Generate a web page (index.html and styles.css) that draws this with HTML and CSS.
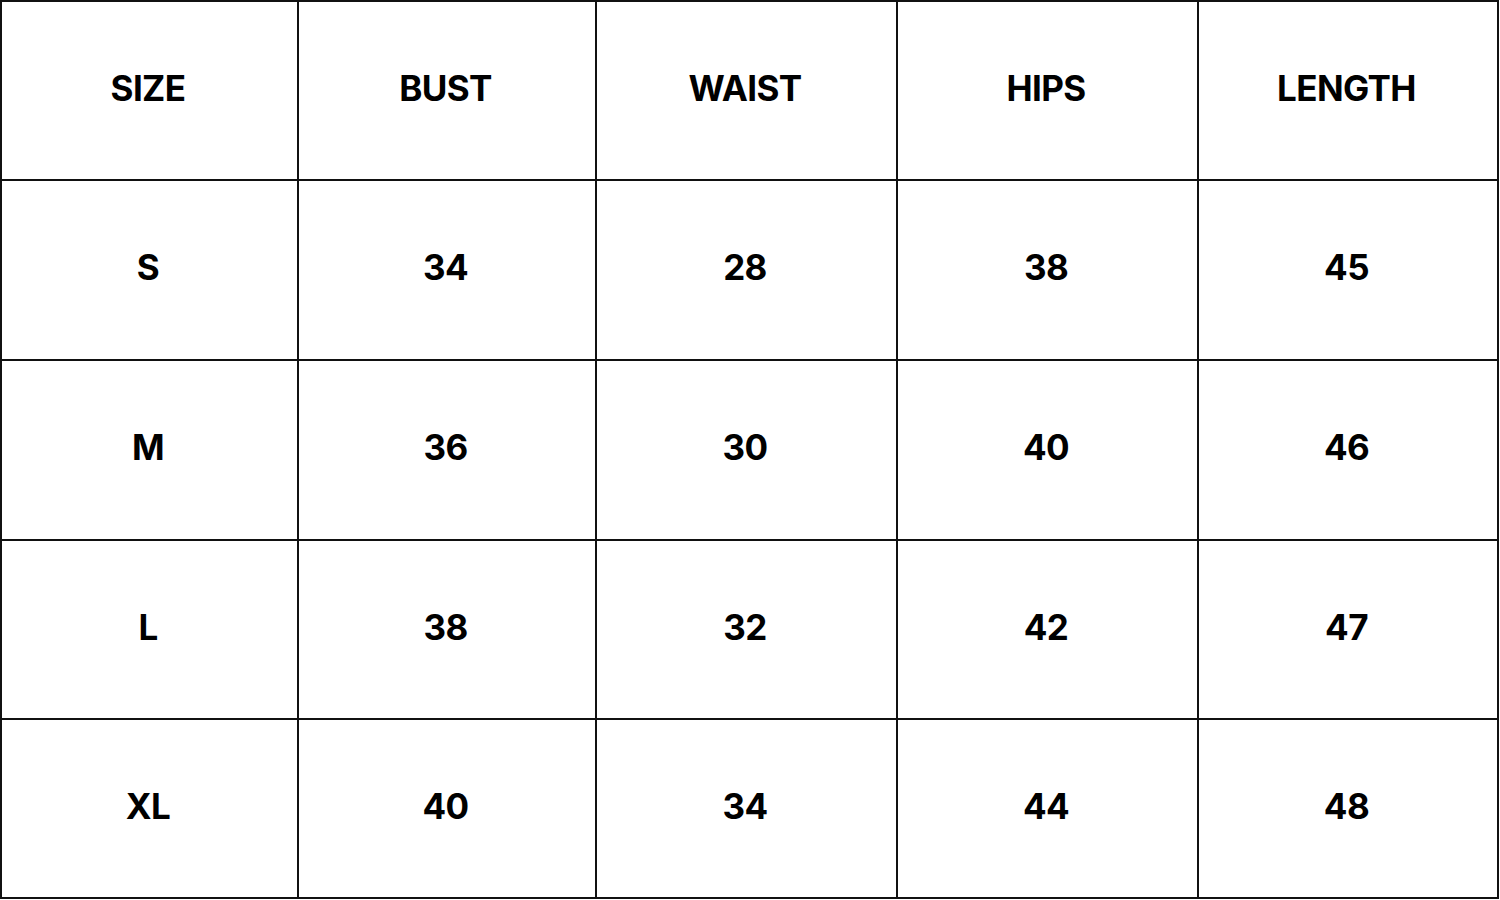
FILE: index.html
```html
<!DOCTYPE html>
<html>
<head>
<meta charset="utf-8">
<link rel="stylesheet" href="styles.css">
</head>
<body>
<div class="chart">
  <div class="cell">SIZE</div><div class="cell">BUST</div><div class="cell">WAIST</div><div class="cell">HIPS</div><div class="cell">LENGTH</div>
  <div class="cell">S</div><div class="cell">34</div><div class="cell">28</div><div class="cell">38</div><div class="cell">45</div>
  <div class="cell">M</div><div class="cell">36</div><div class="cell">30</div><div class="cell">40</div><div class="cell">46</div>
  <div class="cell">L</div><div class="cell">38</div><div class="cell">32</div><div class="cell">42</div><div class="cell">47</div>
  <div class="cell">XL</div><div class="cell">40</div><div class="cell">34</div><div class="cell">44</div><div class="cell">48</div>
</div>
</body>
</html>
```
FILE: styles.css
```css
html, body {
  margin: 0;
  padding: 0;
  background: #ffffff;
}
body {
  width: 1500px;
  height: 900px;
  overflow: hidden;
}
.chart {
  display: grid;
  grid-template-columns: 295px 296px 299px 299px 298px;
  grid-template-rows: 177px 178px 178px 177px 177px;
  gap: 2px;
  padding: 2px;
  width: max-content;
  background: #111111;
  font-family: Inter, "Liberation Sans", sans-serif;
  font-weight: 700;
  font-size: 35px;
  letter-spacing: -0.6px;
  color: #000000;
}
.cell {
  background: #ffffff;
  display: flex;
  align-items: center;
  justify-content: center;
  padding-bottom: 6px;
  padding-right: 3px;
  box-sizing: border-box;
}
```
